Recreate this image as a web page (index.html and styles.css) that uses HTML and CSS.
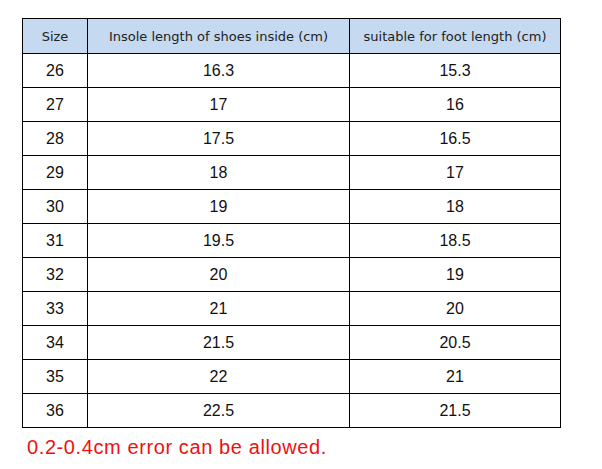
FILE: index.html
```html
<!DOCTYPE html>
<html>
<head>
<meta charset="utf-8">
<link rel="stylesheet" href="styles.css">
</head>
<body>
<div class="page">
<table class="size-table">
  <colgroup>
    <col class="c1"><col class="c2"><col class="c3">
  </colgroup>
  <thead>
    <tr><th>Size</th><th>Insole length of shoes inside (cm)</th><th>suitable for foot length (cm)</th></tr>
  </thead>
  <tbody>
    <tr><td>26</td><td>16.3</td><td>15.3</td></tr>
    <tr><td>27</td><td>17</td><td>16</td></tr>
    <tr><td>28</td><td>17.5</td><td>16.5</td></tr>
    <tr><td>29</td><td>18</td><td>17</td></tr>
    <tr><td>30</td><td>19</td><td>18</td></tr>
    <tr><td>31</td><td>19.5</td><td>18.5</td></tr>
    <tr><td>32</td><td>20</td><td>19</td></tr>
    <tr><td>33</td><td>21</td><td>20</td></tr>
    <tr><td>34</td><td>21.5</td><td>20.5</td></tr>
    <tr><td>35</td><td>22</td><td>21</td></tr>
    <tr><td>36</td><td>22.5</td><td>21.5</td></tr>
  </tbody>
</table>
<p class="note">0.2-0.4cm error can be allowed.</p>
</div>
</body>
</html>
```
FILE: styles.css
```css
html, body {
  margin: 0;
  padding: 0;
  background: #ffffff;
}
.page {
  padding: 18px 0 0 22px;
}
.size-table {
  border-collapse: collapse;
  table-layout: fixed;
  width: 538px;
}
.c1 { width: 65px; }
.c2 { width: 262px; }
.c3 { width: 211px; }
.size-table th,
.size-table td {
  border: 1px solid #000;
  padding: 0;
  text-align: center;
  vertical-align: middle;
}
.size-table th {
  background: #c5d9f1;
  height: 34px;
  font-family: "DejaVu Sans", sans-serif;
  font-weight: normal;
  font-size: 13px;
  color: #222;
}
.size-table td {
  height: 33px;
  font-family: "Liberation Sans", Arial, sans-serif;
  font-size: 16px;
  color: #111;
}
.note {
  margin: 7px 0 0 5px;
  font-family: "Liberation Sans", Arial, sans-serif;
  font-size: 20px;
  letter-spacing: 0.6px;
  line-height: 24px;
  color: #ee1111;
}
```
